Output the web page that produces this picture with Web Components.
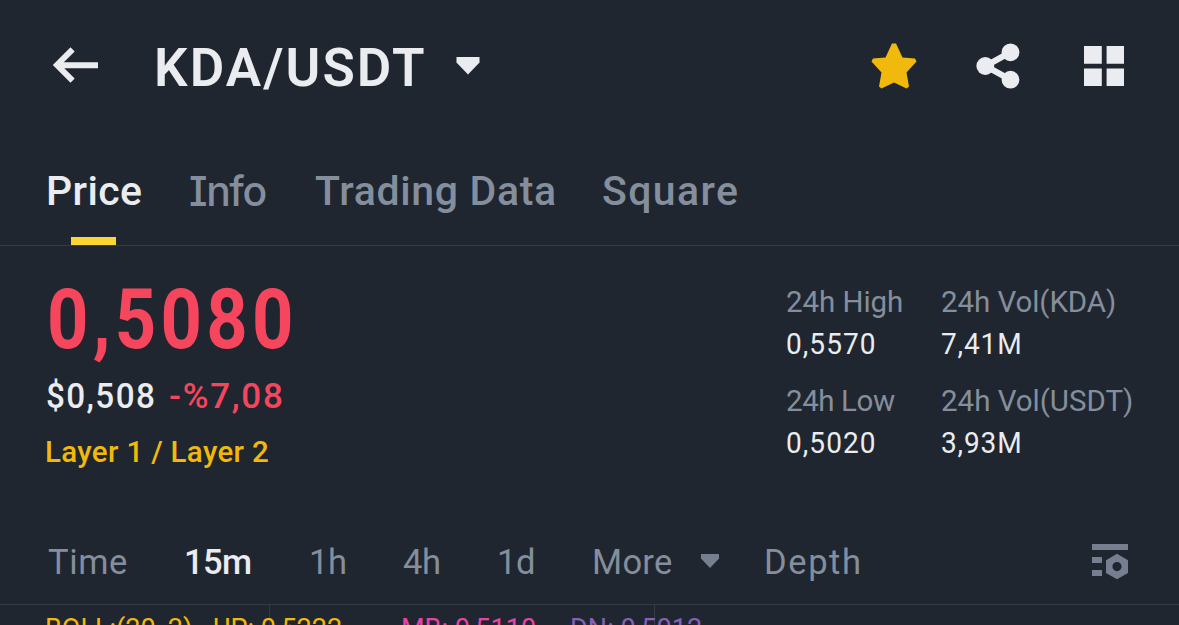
<!DOCTYPE html>
<html lang="en">
<head>
<meta charset="utf-8">
<title>KDA/USDT</title>
<style>
  html, body {
    margin: 0;
    height: 100%;
    overflow: hidden;
    background: #202630;
  }
</style>
</head>
<body>
<market-page></market-page>

<script>
const ctx = document.createElement('canvas').getContext('2d');

// Text whose visible ink is exactly `width` px wide, spaced to fit.
class FitLabel extends HTMLElement {
  constructor() {
    super();
    this.attachShadow({ mode: 'open' });
    this.shadowRoot.innerHTML = `
      <style>
        :host { display: block; flex: none; white-space: nowrap; }
        span { display: inline-block; transform-origin: 0 50%; }
      </style>
      <span><slot></slot></span>
    `;
  }

  connectedCallback() {
    const width = Number(this.getAttribute('width'));
    const stretch = Number(this.getAttribute('stretch') || 1);
    const text = this.textContent;
    const cs = getComputedStyle(this);
    ctx.font = `${cs.fontWeight} ${cs.fontSize} ${cs.fontFamily}`;
    const m = ctx.measureText(text);
    const ink = m.actualBoundingBoxLeft + m.actualBoundingBoxRight;
    const span = this.shadowRoot.querySelector('span');
    this.style.width = width + 'px';
    span.style.letterSpacing = (width / stretch - ink) / (text.length - 1) + 'px';
    span.style.marginLeft = m.actualBoundingBoxLeft * stretch + 'px';
    if (stretch !== 1) span.style.transform = `scaleX(${stretch})`;
  }
}

class PairHeader extends HTMLElement {
  constructor() {
    super();
    this.attachShadow({ mode: 'open' });
    this.shadowRoot.innerHTML = `
      <style>
        :host {
          display: flex;
          align-items: center;
          height: 132px;
          padding: 0 55px 0 52px;
          box-sizing: border-box;
          color: var(--text-primary);
        }
        svg { display: block; flex: none; fill: currentColor; }
        fit-label { font-size: 53px; font-weight: 600; line-height: 64px; margin: 4px 32px 0 59px; }
        .actions { display: flex; align-items: center; margin-left: auto; }
        .star { color: var(--yellow); margin-right: 59px; }
        .share { margin-right: 64px; }
      </style>
      <svg width="46" height="38" viewBox="0 0 46 38">
        <path d="M.8 18 18.5 0.2 22.7 4.4 11.8 15.2H46V21.3H12.3L22.7 31.6 18.5 35.8Z"/>
      </svg>
      <fit-label width="267">KDA/USDT</fit-label>
      <svg width="24" height="18" viewBox="0 0 24 18">
        <path d="M.5 0H23.5V5.5L12 17.5.5 5.5Z"/>
      </svg>
      <div class="actions">
        <svg class="star" width="46" height="46" viewBox="0 0 46 46">
          <path d="M21 .5H25L31.5 14.5 44 15.5 45.5 18.5 35.5 29.5 38 43.5 35.5 45.5 23 39.5 10.5 45.5 8 43.5 10.5 29.5 .5 18.5 2 15.5 14.5 14.5Z"/>
        </svg>
        <svg class="share" width="44" height="46" viewBox="0 0 44 46">
          <path d="M34 9.5 9.5 23 34 36.5" fill="none" stroke="currentColor" stroke-width="6"/>
          <circle cx="34.5" cy="9.3" r="8.9"/>
          <circle cx="9.3" cy="23" r="8.9"/>
          <circle cx="34.5" cy="36.7" r="8.9"/>
        </svg>
        <svg width="40" height="40" viewBox="0 0 40 40">
          <path d="M0 0H17.8V17.8H0ZM22.6 0H40V17.8H22.6ZM0 22.5H17.8V40H0ZM22.6 22.5H40V40H22.6Z"/>
        </svg>
      </div>
    `;
  }
}

class PageTabs extends HTMLElement {
  constructor() {
    super();
    this.attachShadow({ mode: 'open' });
    this.shadowRoot.innerHTML = `
      <style>
        :host {
          display: flex;
          gap: 48px;
          height: 114px;
          padding: 0 48px;
          box-sizing: border-box;
          border-bottom: 1px solid var(--line);
          color: var(--text-muted);
          font-size: 41px;
          font-weight: 500;
          line-height: 50px;
        }
        .tab {
          display: flex;
          flex-direction: column;
          align-items: center;
          justify-content: space-between;
          padding-top: 34px;
        }
        .active { color: var(--text-primary); }
        .active::after { content: ""; width: 45px; height: 8px; margin-right: 2px; background: var(--yellow-light); }
        /* serifed capital I */
        .info { font-family: Inter, Roboto, sans-serif; font-feature-settings: "cv08"; margin: 0 9px 0 3px; }
      </style>
      <div class="tab active"><fit-label width="93">Price</fit-label></div>
      <div class="tab"><fit-label class="info" width="66">Info</fit-label></div>
      <div class="tab"><fit-label width="240">Trading Data</fit-label></div>
      <div class="tab"><fit-label width="134">Square</fit-label></div>
    `;
  }
}

class PriceSummary extends HTMLElement {
  constructor() {
    super();
    this.attachShadow({ mode: 'open' });
    this.shadowRoot.innerHTML = `
      <style>
        :host {
          display: flex;
          justify-content: space-between;
          height: 284px;
          padding: 0 46px 0 47px;
          box-sizing: border-box;
          color: var(--text-primary);
        }
        .last { font-size: 84px; font-weight: 700; line-height: 100px; color: var(--red); margin: 24px 0 0 3px; }
        .change { display: flex; gap: 16px; font-size: 35px; font-weight: 500; line-height: 44px; margin-top: 5px; }
        .change .down { color: var(--red); }
        .tag { font-size: 29.5px; font-weight: 500; line-height: 40px; margin-top: 13px; color: var(--yellow); }
        .stats {
          display: grid;
          grid-template-columns: 155px 191px;
          grid-auto-rows: 99px;
          margin-top: 35px;
          font-size: 29.5px;
          line-height: 42px;
        }
        .stats .name { color: var(--text-muted); }
      </style>
      <div>
        <fit-label class="last" width="241" stretch="0.86">0,5080</fit-label>
        <div class="change">
          <fit-label width="107" stretch="0.95">$0,508</fit-label>
          <fit-label class="down" width="112">-%7,08</fit-label>
        </div>
        <fit-label class="tag" width="221">Layer 1 / Layer 2</fit-label>
      </div>
      <div class="stats">
        <div><fit-label class="name" width="115">24h High</fit-label><fit-label width="87" stretch="0.95">0,5570</fit-label></div>
        <div><fit-label class="name" width="173">24h Vol(KDA)</fit-label><fit-label width="78" stretch="0.95">7,41M</fit-label></div>
        <div><fit-label class="name" width="108">24h Low</fit-label><fit-label width="87" stretch="0.95">0,5020</fit-label></div>
        <div><fit-label class="name" width="190">24h Vol(USDT)</fit-label><fit-label width="78" stretch="0.95">3,93M</fit-label></div>
      </div>
    `;
  }
}

class IntervalBar extends HTMLElement {
  constructor() {
    super();
    this.attachShadow({ mode: 'open' });
    this.shadowRoot.innerHTML = `
      <style>
        :host {
          display: flex;
          align-items: center;
          height: 75px;
          padding: 0 51px 0 48px;
          box-sizing: border-box;
          border-bottom: 1px solid var(--line);
          color: var(--text-muted);
          font-size: 34.5px;
          line-height: 44px;
        }
        svg { display: block; flex: none; fill: #757f90; }
        .items { display: flex; align-items: center; padding-bottom: 10px; }
        .items svg { margin-bottom: 3px; }
        .active { color: var(--text-primary); font-weight: 500; }
        .settings { margin-left: auto; margin-bottom: 11px; }
      </style>
      <div class="items">
        <fit-label width="79">Time</fit-label>
        <fit-label class="active" width="64" style="margin-left:59px">15m</fit-label>
        <fit-label width="34" style="margin-left:61px">1h</fit-label>
        <fit-label width="36" style="margin-left:58px">4h</fit-label>
        <fit-label width="34" style="margin-left:60px">1d</fit-label>
        <fit-label width="78" style="margin-left:61px">More</fit-label>
        <svg width="18" height="14" viewBox="0 0 18 14" style="margin-left:29px"><path d="M0 0H18V4.5L9 14 0 4.5Z"/></svg>
        <fit-label width="93" style="margin-left:47px">Depth</fit-label>
      </div>
      <svg class="settings" width="36" height="36" viewBox="0 0 36 36">
        <path d="M0 0H36V6H0ZM0 13H10V19H0ZM0 26H10V32H0Z"/>
        <path fill-rule="evenodd" d="M25 9.8 36 16.3V29L25 35.3 14 29V16.3ZM25 18A4.6 4.6 0 1 0 25 27.2 4.6 4.6 0 1 0 25 18Z"/>
      </svg>
    `;
  }
}

class ChartArea extends HTMLElement {
  constructor() {
    super();
    this.attachShadow({ mode: 'open' });
    this.shadowRoot.innerHTML = `
      <style>
        :host {
          display: flex;
          height: 20px;
          padding: 9px 0 0 47px;
          box-sizing: border-box;
          overflow: hidden;
          font-size: 27px;
          line-height: 30px;
          /* vertical grid lines */
          background:
            linear-gradient(var(--line), var(--line)) 269px 0 / 1px 100% no-repeat,
            linear-gradient(var(--line), var(--line)) 654px 0 / 1px 100% no-repeat;
        }
        .boll { color: var(--yellow); margin-right: 23px; }
        .up { color: var(--yellow); margin-right: 61px; }
        .mb { color: #e843a8; margin-right: 37px; }
        .dn { color: #8460b8; }
      </style>
      <fit-label class="boll" width="144">BOLL:(20, 2)</fit-label>
      <fit-label class="up" width="128">UP: 0,5222</fit-label>
      <fit-label class="mb" width="132">MB: 0,5110</fit-label>
      <fit-label class="dn" width="130">DN: 0,5012</fit-label>
    `;
  }
}

class MarketPage extends HTMLElement {
  constructor() {
    super();
    this.attachShadow({ mode: 'open' });
    this.shadowRoot.innerHTML = `
      <style>
        :host {
          --text-primary: #eaecef;
          --text-muted: #848e9c;
          --yellow: #f0b90b;
          --yellow-light: #fcd535;
          --red: #f6465d;
          --line: #343b47;
          display: flex;
          flex-direction: column;
          height: 625px;
          overflow: hidden;
          font-family: Roboto, "Liberation Sans", sans-serif;
        }
      </style>
      <pair-header></pair-header>
      <page-tabs></page-tabs>
      <price-summary></price-summary>
      <interval-bar></interval-bar>
      <chart-area></chart-area>
    `;
  }
}

customElements.define('fit-label', FitLabel);
customElements.define('pair-header', PairHeader);
customElements.define('page-tabs', PageTabs);
customElements.define('price-summary', PriceSummary);
customElements.define('interval-bar', IntervalBar);
customElements.define('chart-area', ChartArea);
customElements.define('market-page', MarketPage);
</script>
</body>
</html>
